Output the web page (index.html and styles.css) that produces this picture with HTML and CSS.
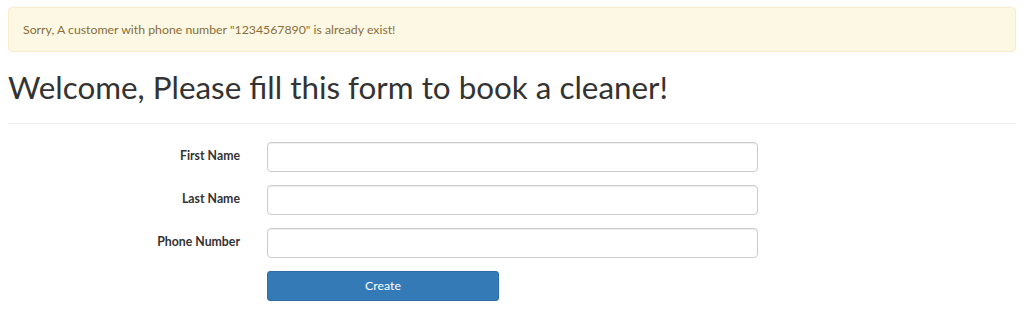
FILE: index.html
```html
<!DOCTYPE html>
<html>
<head>
<meta charset="utf-8">
<link rel="stylesheet" href="styles.css">
</head>
<body>
<div class="alert">Sorry, A customer with phone number "1234567890" is already exist!</div>
<h1 class="title">Welcome, Please fill this form to book a cleaner!</h1>
<hr class="rule">
<form class="form">
  <div class="row">
    <label class="label">First Name</label>
    <input class="input" type="text">
  </div>
  <div class="row">
    <label class="label">Last Name</label>
    <input class="input" type="text">
  </div>
  <div class="row">
    <label class="label">Phone Number</label>
    <input class="input" type="text">
  </div>
  <div class="row">
    <span class="label"></span>
    <button class="btn" type="button">Create</button>
  </div>
</form>
</body>
</html>
```
FILE: styles.css
```css
* { box-sizing: border-box; }
html, body { margin: 0; padding: 0; background: #fff; }
body {
  font-family: Lato, "Open Sans", sans-serif;
  font-size: 12.3px;
  color: #333;
  padding: 7px 8px 0 8px;
}
.alert {
  background: #fcf8e3;
  border: 1px solid #faebcc;
  color: #8a6d3b;
  border-radius: 4px;
  height: 45px;
  padding: 0 14px;
  display: flex;
  align-items: center;
  font-size: 12.3px;
}
.title {
  font-weight: 400;
  font-size: 31.4px;
  line-height: 1.1;
  margin: 18px 0 0 0;
  color: #333;
}
.rule {
  border: 0;
  border-top: 1px solid #eee;
  margin: 18px 0 18px 0;
}
.form {
  display: flex;
  flex-direction: column;
  gap: 13px;
}
.row {
  display: grid;
  grid-template-columns: 232px 491px;
  column-gap: 27px;
  align-items: center;
}
.label {
  text-align: right;
  font-weight: 700;
  font-size: 12.3px;
  position: relative;
  top: -1px;
}
.input {
  height: 30px;
  border: 1px solid #ccc;
  border-radius: 4px;
  box-shadow: inset 0 1px 1px rgba(0,0,0,.075);
  background: #fff;
  font-family: inherit;
}
.btn {
  width: 232px;
  height: 30px;
  background: #337ab7;
  border: 1px solid #2e6da4;
  color: #fff;
  border-radius: 3px;
  font-family: inherit;
  font-size: 12.3px;
}
```
